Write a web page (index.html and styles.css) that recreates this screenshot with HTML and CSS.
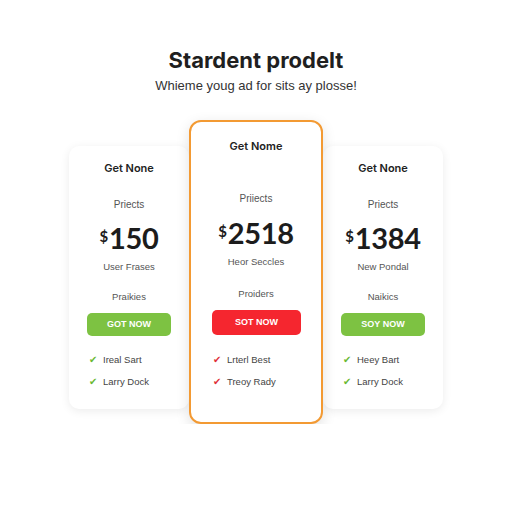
FILE: index.html
```html
<!doctype html>
<html>
<head>
<meta charset="utf-8" />
<title>Pricing</title>
<link rel="stylesheet" href="styles.css">
</head>
<body>
<div class="head">
	<h1>Stardent prodelt</h1>
	<p>Whieme youg ad for sits ay plosse!</p>
</div>

<div class="plans">
	<div class="card">
		<h3>Get None</h3>
		<div class="lbl">Priects</div>
		<div class="price"><sup>$</sup>150</div>
		<div class="sub">User Frases</div>
		<div class="lbl2">Praikies</div>
		<a class="btn" href="javascript:;">GOT NOW</a>
		<ul>
			<li><i>&#10004;</i>Ireal Sart</li>
			<li><i>&#10004;</i>Larry Dock</li>
		</ul>
	</div>
	<div class="card featured">
		<h3>Get Nome</h3>
		<div class="lbl">Priiects</div>
		<div class="price"><sup>$</sup>2518</div>
		<div class="sub">Heor Seccles</div>
		<div class="lbl2">Proiders</div>
		<a class="btn" href="javascript:;">SOT NOW</a>
		<ul>
			<li><i>&#10004;</i>Lrterl Best</li>
			<li><i>&#10004;</i>Treoy Rady</li>
		</ul>
	</div>
	<div class="card">
		<h3>Get None</h3>
		<div class="lbl">Priects</div>
		<div class="price"><sup>$</sup>1384</div>
		<div class="sub">New Pondal</div>
		<div class="lbl2">Naikics</div>
		<a class="btn" href="javascript:;">SOY NOW</a>
		<ul>
			<li><i>&#10004;</i>Heey Bart</li>
			<li><i>&#10004;</i>Larry Dock</li>
		</ul>
	</div>
</div>
</body>
</html>
```

FILE: styles.css
```css
*{margin: 0;padding: 0;box-sizing: border-box;}
body{background: #fff;font-family: "Liberation Sans",Arial,sans-serif;color: #222;}
.head{text-align: center;padding-top: 46px;}
.head h1{font-family: Inter,"Open Sans",sans-serif;font-size: 22px;line-height: 28px;font-weight: 700;color: #1f1f1f;}
.head p{font-size: 13px;line-height: 16px;margin-top: 4px;color: #333;}

.plans{display: flex;justify-content: center;align-items: flex-start;margin-top: 26px;}
.card{width: 120px;height: 263px;margin-top: 26px;background: #fff;border-radius: 10px;
	box-shadow: 0 2px 10px rgba(0,0,0,0.08);text-align: center;padding-top: 14px;}
.card h3{font-family: Inter,"Open Sans",sans-serif;font-size: 11px;line-height: 16px;font-weight: 600;color: #222;}
.lbl{font-size: 10px;line-height: 16px;color: #555;margin-top: 21px;}
.price{font-family: Lato,"Open Sans",sans-serif;font-size: 29px;line-height: 34px;font-weight: 700;color: #1c1c1c;margin-top: 8px;letter-spacing: -0.3px;}
.price sup{font-size: 15px;vertical-align: top;position: relative;top: -2px;margin-right: 1px;}
.sub{font-size: 9.5px;line-height: 16px;color: #555;margin-top: 4px;}
.lbl2{font-size: 9.5px;line-height: 16px;color: #555;margin-top: 14px;}
.btn{display: block;margin: 8px 18px 0;height: 23px;line-height: 23px;border-radius: 5px;background: #7dc242;
	color: #fff;font-size: 9px;font-weight: 700;text-decoration: none;}
.card ul{list-style: none;text-align: left;padding-left: 20px;margin-top: 16px;}
.card li{font-size: 9.5px;line-height: 16px;color: #444;margin-bottom: 6px;}
.card li i{font-style: normal;color: #6ab934;font-size: 10px;margin-right: 6px;}

.featured{width: 134px;height: 304px;margin-top: 0;border: 2px solid #f39a33;border-radius: 12px;
	padding-top: 16px;position: relative;z-index: 2;box-shadow: 0 4px 14px rgba(0,0,0,0.12);}
.featured .lbl{margin-top: 37px;}
.featured .price{margin-top: 9px;}
.featured .lbl2{margin-top: 16px;}
.featured .btn{margin: 8px 20px 0 21px;height: 25px;line-height: 25px;background: #f5262f;}
.featured ul{margin-top: 17px;padding-left: 22px;}
.featured li i{color: #e0303a;}
```
